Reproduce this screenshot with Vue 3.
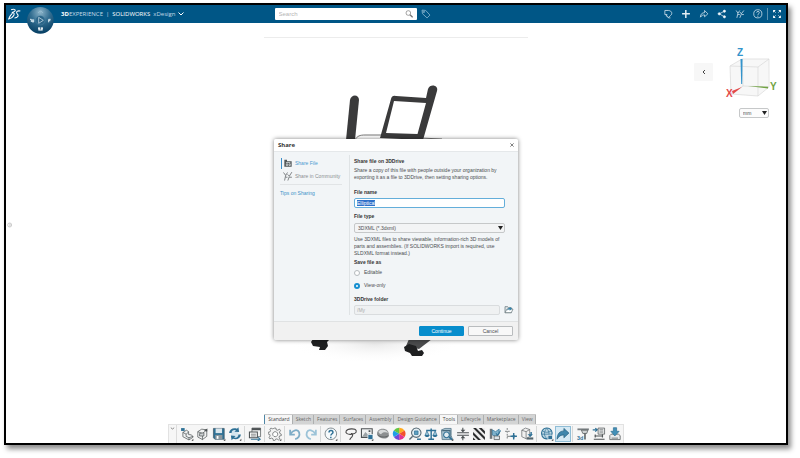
<script setup>
import { onMounted, ref } from 'vue'

const fileName = ref('Elliptical')
const fileType = ref('3dxml')
const saveAs = ref('view')
const folder = ref('/My')
const unit = ref('mm')
const query = ref('')
const nameInput = ref(null)

const tabs = ['Standard', 'Sketch', 'Features', 'Surfaces', 'Assembly', 'Design Guidance', 'Tools', 'Lifecycle', 'Marketplace', 'View']
const currentTabs = ['Standard', 'Tools']

const D = '#4d5254'
const B = '#2f7196'
const L = '#a9cfe2'
const W = '#ffffff'
const more = { d: 'M37 33v5h-5z', f: '#333' }

const groups = [
  [
    { name: 'New', p: [
      { d: 'M8 15l10-6 6 4v8l8 1 5 6-12 8-17-9z', f: '#eef0f1', s: D },
      { d: 'M8 15l9 5 7-6M17 20v6l8 4 11-4M25 30v6', s: D },
      { d: 'M3 3h10v8H3z', f: B }, more] },
    { name: 'Open', p: [
      { d: 'M5 13l11-7 14 2v18l-12 9-13-7z', f: '#f1f2f2', s: D },
      { d: 'M5 13l13 5 12-10M18 18v17', s: D },
      { d: 'M10 18l12-2v9H10z', f: '#cdd1d3', s: D },
      { d: 'M22 9l10-5-1 9z', f: D }] },
    { name: 'Save', p: [
      { d: 'M4 4h30v30H8l-4-4z', f: B, s: '#3c5665' },
      { d: 'M10 4h18v13H10z', f: '#dbe6ec' },
      { d: 'M9 22h20v12H9z', f: '#8d989e' },
      { d: 'M13 25h5v8h-5z', f: W }, more] },
    { name: 'Update', p: [
      { d: 'M9 8h20v23H9z', f: '#d5e6ef' },
      { d: 'M3 17C4 6 15 1 25 5l4-4 2 13-13-1 4-4C15 7 10 10 10 17z', f: B },
      { d: 'M36 21c-1 11-12 16-22 12l-4 4-2-13 13 1-4 4c7 2 12-1 12-8z', f: B }, more] },
  ],
  [
    { name: 'Properties', p: [
      { d: 'M11 3h24v24H11z', f: '#f3f4f4', s: D },
      { d: 'M11 3h24v6H11z', f: D },
      { d: 'M4 14h22v16H4z', f: W, s: D, w: 3 },
      { d: 'M8 20h14M8 25h14', s: D },
      { d: 'M8 34h22M27 28l7 6-7 5', s: B, w: 3 }] },
  ],
  [
    { name: 'Options', p: [
      { d: 'M17 3h5l1 5 4 1 5-3 3 4-3 4 1 4 4 2v4l-5 1-1 4 2 4-4 3-4-3-4 1-2 4h-4l-1-5-4-2-5 2-2-4 3-4-1-4-5-2v-4l5-1 2-4-2-4 3-3 5 2 3-1z', f: '#f2f2f2', s: '#5b5f61' },
      { d: 'M20 13a7 7 0 1 0 .1 0z', f: W, s: '#5b5f61' }, more] },
  ],
  [
    { name: 'Undo', p: [
      { d: 'M6 8v13h13', s: '#7fadc7', w: 5 },
      { d: 'M7 20C13 8 27 5 31 15c3 9-2 17-11 19', s: '#7fadc7', w: 5 }] },
    { name: 'Redo', p: [
      { d: 'M33 8v13H20', s: '#9cc3d8', w: 5 },
      { d: 'M32 20C26 8 12 5 8 15c-3 9 2 17 11 19', s: '#9cc3d8', w: 5 }] },
  ],
  [
    { name: 'Help', p: [
      { d: 'M19 3a16 16 0 1 0 .1 0z', f: '#f6fafc', s: '#536068' },
      { d: 'M14 15c0-7 11-7 11 0 0 4-6 4-6 9M19 27v4', s: B, w: 4 }, more] },
  ],
  [
    { name: 'Lasso', p: [
      { d: 'M22 20C10 22 3 17 6 11 10 4 31 3 34 10c2 7-8 11-14 8 4 0 5 4 3 8-2 3-6 5-7 10', s: '#4a4a4a', w: 3 }] },
    { name: 'Capture', p: [
      { d: 'M4 5h30v24H4z', f: '#eef0f0', s: D, w: 3 },
      { d: 'M6 27l9-13 7 7 4-4 6 10z', f: '#9ba2a5' },
      { d: 'M24 9h5v5h-5z', f: D },
      { d: 'M22 21h14v14H22z', f: B, s: W }, more] },
    { name: 'Section', p: [
      { d: 'M3 20C2 9 12 3 22 5c12 2 16 13 13 22-8 9-27 6-32-7z', f: '#8c8f90' },
      { d: 'M7 12c9-7 22-5 27 4-7-3-17-2-20 4-5-1-7-4-7-8z', f: '#d7d9d9' },
      { d: 'M4 22c9 7 22 8 31 2', s: '#505354' }] },
    { name: 'Appearance', p: [
      { d: 'M20 19V2a17 17 0 0 1 15 8z', f: '#ffa91e' },
      { d: 'M20 19l15-9a17 17 0 0 1 0 18z', f: '#f3512b' },
      { d: 'M20 19l15 9a17 17 0 0 1-15 8z', f: '#e3318e' },
      { d: 'M20 19v17A17 17 0 0 1 5 28z', f: '#7049d8' },
      { d: 'M20 19L5 28a17 17 0 0 1 0-18z', f: '#1e9fe6' },
      { d: 'M20 19L5 10a17 17 0 0 1 15-8z', f: '#62c544' }] },
    { name: 'Measure', p: [
      { d: 'M23 3a13 13 0 1 0 .1 0z', f: '#e5f0f5', s: '#5a6c76', w: 3 },
      { d: 'M13 26L4 35', s: '#5a6c76', w: 4 },
      { d: 'M18 11h10v10H18z', f: '#5d9fc0', s: B },
      { d: 'M25 32h11v4H25z', f: B }] },
    { name: 'Mass properties', p: [
      { d: 'M20 4v30M12 34h16M6 10h28', s: B, w: 4 },
      { d: 'M3 23l5-12 6 12zM25 23l6-12 5 12z', f: L, s: B },
      { d: 'M1 22h15l-4 6H5zM23 22h15l-4 6h-7z', f: B }] },
    { name: 'Bounding box', p: [
      { d: 'M4 8l10-4h17v20l4 11H6z', f: '#a8c2cf', s: '#486b7e' },
      { d: 'M6 10h22v22', s: '#486b7e', w: 3 },
      { d: 'M18 14a8 8 0 1 0 .1 0z', f: '#e2edf2', s: B, w: 3 },
      { d: 'M25 28l9 7', s: B, w: 4 }, more] },
    { name: 'Clearance', p: [
      { d: 'M3 16h33M3 23h33', s: D, w: 3 },
      { d: 'M19 2v9M19 28v9', s: D, w: 3 },
      { d: 'M13 8h13l-7 7zM13 31h13l-7-7z', f: D }] },
    { name: 'Zebra stripes', p: [
      { d: 'M3 3h33v33H3z', f: '#ededed' },
      { d: 'M3 3h8l25 25v8zM3 14l22 22h-8L3 22zM19 3h8l9 9v8zM3 29l7 7H3z', f: '#292b2c' }] },
    { name: 'Check', p: [
      { d: 'M5 5h7v28H5z', f: '#6f777b' },
      { d: 'M12 8l9 5 10-7v14l-10 7-9-5z', f: '#7eb2cc', s: B },
      { d: 'M17 25h15v10H17z', f: '#dce4e8', s: D },
      { d: 'M22 18l5 5 8-13', s: B, w: 3 }] },
    { name: 'Reference point', p: [
      { d: 'M9 3v32M3 12h14', s: D, w: 2, dash: '5 3' },
      { d: 'M9 26h10', s: D },
      { d: 'M27 17v18M18 26h18', s: B, w: 4 },
      { d: 'M22 26l5-5 5 5-5 5z', f: B }] },
    { name: 'Configurations', p: [
      { d: 'M5 9l10-6 12 4v19l-9 7-13-6z', f: '#f1f1f1', s: '#63686a' },
      { d: 'M5 9l12 4 10-6M17 13v20', s: '#63686a' },
      { d: 'M21 20h8v-6h4v6h3l-7 8-8-8z', f: B },
      { d: 'M19 29h18v6H19z', f: '#54666f' }] },
  ],
  [
    { name: 'Publish', p: [
      { d: 'M19 3a15 15 0 1 0 .1 0z', f: '#bfd9e5', s: B, w: 3 },
      { d: 'M7 11c7 5 16 5 24 0M4 20h29M19 4c-9 9-9 20 0 28M19 4c8 9 8 20 0 28', s: B },
      { d: 'M22 23h13v12H22z', f: B, s: W }, more] },
    { name: 'Share', active: true, p: [
      { d: 'M3 34C3 19 11 11 22 11V4l14 13-14 13v-8c-8 0-14 3-19 12z', f: '#3f86ac', s: '#29617f' }] },
  ],
  [
    { name: '3D print', label: '3d', p: [
      { d: 'M4 4h32v5H4z', f: '#7b8184' },
      { d: 'M15 9h18l-3 9H19z', f: '#d1d4d5', s: D },
      { d: 'M23 18h4v17h-4z', f: D }] },
    { name: 'Drawing', p: [
      { d: 'M2 8h12M9 3l6 5-6 5', s: B, w: 3 },
      { d: 'M17 3h18v17H17z', f: '#e8eaeb', s: D },
      { d: 'M21 8h10M21 14h10', s: D },
      { d: 'M7 25h24M9 21v8M29 20v9M5 34h30', s: D, w: 3 }] },
    { name: 'Import', p: [
      { d: 'M5 24l4-4h20l5 4v11H5z', f: '#e9ebec', s: D },
      { d: 'M15 2h9v10h7L19 25 8 12h7z', f: '#4390b7', s: B },
      { d: 'M10 31h18', s: D }] },
  ],
]

onMounted(() => {
  nameInput.value.focus({ preventScroll: true })
  nameInput.value.select()
})
</script>

<template>
  <div class="page">
    <div class="app">
      <header class="topbar">
        <svg class="ds" viewBox="0 0 38 38" aria-hidden="true">
          <path d="M9 5c7-3 15-1 11 4-2 3-6 4-9 4 7 0 9 4 5 10-3 5-8 8-14 9 3-8 6-12 11-17M36 9c-8-2-14 2-9 8 5 5 2 12-8 12" />
        </svg>
        <button class="compass" aria-label="Compass">
          <svg viewBox="0 0 81 81" aria-hidden="true">
            <defs>
              <radialGradient id="ball" cx=".5" cy=".2" r=".8">
                <stop offset="0" stop-color="#8db4c9" />
                <stop offset=".45" stop-color="#346f92" />
                <stop offset="1" stop-color="#053e63" />
              </radialGradient>
            </defs>
            <circle cx="40" cy="40" r="40" fill="url(#ball)" />
            <circle cx="40" cy="40" r="14" fill="#2b6689" stroke="#5b93b1" />
            <path d="M35 31l14 9-14 9z" fill="none" stroke="#d9e9f1" stroke-width="2" />
            <path d="M34 17c3-6 10-6 13 0" fill="none" stroke="#9cc2d6" stroke-width="3" />
            <path d="M9 37h4v8M16 37v8h4v-8" fill="none" stroke="#d9e9f1" stroke-width="3" />
            <path d="M65 46v-9h6M65 41h5" fill="none" stroke="#d9e9f1" stroke-width="3" />
            <path d="M35 61v6h3v-6M43 61v6h3v-6M34 69h13" fill="none" stroke="#fff" stroke-width="3" />
          </svg>
        </button>
        <h1 class="brand"><span class="suite"><b>3D</b>EXPERIENCE</span> <span>|</span> <span class="product">SOLIDWORKS</span> <span>xDesign</span>
          <svg viewBox="0 0 12 8" aria-hidden="true"><path d="M1 1l5 5 5-5" /></svg>
        </h1>
        <form class="search" @submit.prevent>
          <div class="searchbox">
            <input v-model="query" type="search" placeholder="Search" aria-label="Search">
            <button aria-label="Run search">
              <svg viewBox="0 0 24 24" aria-hidden="true"><circle cx="10" cy="9" r="7" /><path d="M15 14l8 8" stroke-width="4" /></svg>
            </button>
          </div>
          <button class="tag" aria-label="Tags">
            <svg viewBox="0 0 28 28" aria-hidden="true"><path d="M3 3l10 1 12 13-8 8L4 13z" /><circle cx="8" cy="8" r="2" /></svg>
          </button>
        </form>
        <nav class="actions">
          <button aria-label="Notifications"><svg viewBox="0 0 27 27"><path d="M5 4h10c10 1 11 10 5 14l-6 6-2-5H8l3-4H5z" /><path d="M15 24h5" /></svg></button>
          <button aria-label="Add"><svg viewBox="0 0 27 27"><path d="M13 3v21M3 13h21" stroke-width="4" /></svg></button>
          <button aria-label="Share content"><svg viewBox="0 0 27 27"><path d="M4 22c0-9 5-12 11-12V4l9 9-9 8v-5c-5 0-8 1-11 6z" /></svg></button>
          <button aria-label="Share links"><svg viewBox="0 0 27 27"><path d="M20 6L6 13l14 8" /><circle cx="20" cy="6" r="3" fill="#fff" /><circle cx="6" cy="13" r="3" fill="#fff" /><circle cx="20" cy="21" r="3" fill="#fff" /></svg></button>
          <button aria-label="Communities"><svg viewBox="0 0 27 27"><path d="M3 4l5 7 5-7M8 11L5 24M13 8l4 5 7-9M17 14l-4 10M18 15h6M8 15h5" /></svg></button>
          <button aria-label="Help"><svg viewBox="0 0 27 27"><circle cx="13" cy="13" r="11" /><path d="M10 10c0-5 7-5 7 0 0 3-4 3-4 6M13 18v3" /></svg></button>
          <button class="full" aria-label="Full screen"><svg viewBox="0 0 27 27"><path d="M3 3h7L3 10zM24 3h-7l7 7zM3 24h7l-7-7zM24 24h-7l7-7z" fill="#fff" stroke="none" /><path d="M3 3l7 7M24 3l-7 7M3 24l7-7M24 24l-7-7" /></svg></button>
        </nav>
      </header>

      <main class="stage">
        <svg class="model" viewBox="6 23 780 420" preserveAspectRatio="xMidYMin meet" aria-hidden="true">
          <defs>
            <radialGradient id="floor">
              <stop offset="0" stop-color="#e9e9e9" />
              <stop offset="1" stop-color="#fff" stop-opacity="0" />
            </radialGradient>
          </defs>
          <path d="M264 37.500h264" stroke="#ececec" />
          <ellipse cx="375" cy="344" rx="85" ry="19" fill="url(#floor)" />
          <path d="M355 140c2-4 5-5 10-5h20M420 138l22 1 3 3" fill="none" stroke="#777" stroke-width="1" />
          <path d="M346 140l4-40c1-6 9-6 9 0l-4 40z" fill="#3a3a3b" />
          <path d="M380 138l11-39q1-4 5-3l30 2 2-9c2-6 11-4 9 2l-14 49zM394 101l-8 32 31.500 1 8.500-31z" fill="#3a3a3b" fill-rule="evenodd" />
          <path d="M319 339h11l-3 3 1 4-3 4h-6l1-3-7-1-2-4 2-3z" fill="#1e1f20" />
          <path d="M409 339h23l-13 10-13-3z" fill="#4a4b4c" />
          <path d="M404 347l5-3 7 2 2 5 4-1 2 3-2 3h-10l-2-3-5-2z" fill="#1e1f20" />
        </svg>

        <button class="expand" aria-label="Expand panel">
          <svg viewBox="0 0 18 18" aria-hidden="true"><circle cx="8" cy="9" r="6" /><path d="M6 5l5 4-5 4" /></svg>
        </button>

        <aside class="view-tools">
          <button class="collapse" aria-label="Show view options"><svg viewBox="0 0 12 16" aria-hidden="true"><path d="M9 2L3 8l6 6" /></svg></button>
          <div class="orientation">
            <svg viewBox="722 45 56 55" role="img" aria-label="View orientation">
              <path d="M730 66l12-7 27 0-1 28-10 9-27-2z" fill="#f7f7f7" />
              <path d="M730 66l12-7h27l-11 8zM758 67v29l-27-2-1-28M758 96l11-9V59M742 59l1 27 26 1M743 86l-12 8" fill="none" stroke="#d8d8d8" stroke-width=".7" />
              <path d="M740.500 59h2l-.3 25h-1z" fill="#3394cc" />
              <path d="M748 86l20 .7v1.800z" fill="#71a343" />
              <path d="M742 87l-10 4 1 3z" fill="#e34949" />
              <text x="737" y="56" fill="#3394cc">Z</text>
              <text x="770" y="90" fill="#71a343">Y</text>
              <text x="726" y="97" fill="#e34949">X</text>
            </svg>
            <div class="select unit">
              <select v-model="unit" aria-label="Units"><option value="mm">mm</option><option value="in">in</option></select>
              <svg viewBox="0 0 10 8" aria-hidden="true"><path d="M0 0h10L5 8z" /></svg>
            </div>
          </div>
        </aside>

        <section class="commands">
          <div class="tabs" role="tablist">
            <button v-for="t in tabs" :key="t" role="tab" :class="{ on: currentTabs.includes(t) }">{{ t }}</button>
          </div>
          <div class="toolbar" role="toolbar" aria-label="Commands">
            <button class="grip" aria-label="Collapse toolbar"><svg viewBox="0 0 12 8"><path d="M2 1l4 3 4-3" /></svg></button>
            <div v-for="(g, i) in groups" :key="i" class="group">
              <button v-for="tool in g" :key="tool.name" :aria-label="tool.name" class="tool" :class="{ active: tool.active }">
                <svg viewBox="0 0 39 39" aria-hidden="true">
                  <path v-for="(s, k) in tool.p" :key="k" :d="s.d" :fill="s.f || 'none'" :stroke="s.s || 'none'" :stroke-width="s.w || 2" :stroke-dasharray="s.dash" />
                  <text v-if="tool.label" x="3" y="37">{{ tool.label }}</text>
                </svg>
              </button>
            </div>
          </div>
        </section>

        <div class="overlay">
          <form class="dialog" role="dialog" aria-labelledby="dialog-title" @submit.prevent>
            <div class="titlebar">
              <h2 id="dialog-title">Share</h2>
              <button type="button" class="close" aria-label="Close"><svg viewBox="0 0 12 12"><path d="M1 1l10 10M11 1L1 11" /></svg></button>
            </div>
            <div class="body">
              <nav class="side">
                <a href="#file" class="item current">
                  <svg viewBox="0 0 30 30" aria-hidden="true"><path d="M4 4h8v4h14v17H4z" fill="#505658" /><path d="M9 12h13M10 16h4v5h-4zM18 16h4v5h-4z" stroke="#e8edef" stroke-width="2" fill="none" /></svg>
                  <span>Share File</span>
                </a>
                <a href="#community" class="item">
                  <svg viewBox="0 0 30 30" aria-hidden="true"><path d="M4 4l6 8 5-8M10 12L7 26M15 9l5 5 7-11M20 15l-4 11M20 17h7M10 17h5" fill="none" stroke="#5b5f61" stroke-width="2" /></svg>
                  <span>Share in Community</span>
                </a>
                <a href="#tips" class="tips">Tips on Sharing</a>
              </nav>
              <div class="form">
                <h3>Share file on 3DDrive</h3>
                <p>Share a copy of this file with people outside your organization by exporting it as a file to 3DDrive, then setting sharing options.</p>
                <label class="name" for="file-name">File name</label>
                <input id="file-name" ref="nameInput" v-model="fileName" type="text">
                <label for="file-type">File type</label>
                <div class="select">
                  <select id="file-type" v-model="fileType"><option value="3dxml">3DXML (*.3dxml)</option><option value="sldxml">SLDXML (*.sldxml)</option></select>
                  <svg viewBox="0 0 10 8" aria-hidden="true"><path d="M0 0h10L5 8z" /></svg>
                </div>
                <p class="hint">Use 3DXML files to share viewable, information-rich 3D models of parts and assemblies. (If SOLIDWORKS import is required, use SLDXML format instead.)</p>
                <fieldset>
                  <legend>Save file as</legend>
                  <label><input v-model="saveAs" type="radio" name="save-as" value="edit">Editable</label>
                  <label><input v-model="saveAs" type="radio" name="save-as" value="view">View-only</label>
                </fieldset>
                <label class="where" for="folder">3DDrive folder</label>
                <div class="folder">
                  <input id="folder" v-model="folder" type="text" disabled>
                  <button type="button" aria-label="Choose folder">
                    <svg viewBox="0 0 30 27" aria-hidden="true"><path d="M3 5h8l2 3h9v15H3z" fill="#e2e8eb" stroke="#596970" stroke-width="2" /><path d="M3 23l6-11h18l-5 11z" fill="#fff" stroke="#596970" stroke-width="2" /><path d="M10 17c0-6 3-8 7-8V5l7 6-7 6v-4c-3 0-5 1-7 4z" fill="#3483a9" /></svg>
                  </button>
                </div>
              </div>
            </div>
            <footer>
              <button type="submit" class="primary">Continue</button>
              <button type="button">Cancel</button>
            </footer>
          </form>
        </div>
      </main>
    </div>
  </div>
</template>

<style>
body { background: #fff; }
</style>

<style scoped>
.page { box-sizing: border-box; height: 100vh; padding: 3px 12px 13px 4px; font: 5px/7px "Liberation Sans", Arial, sans-serif; color: #4a4d50; }
.page * { box-sizing: border-box; }
.app { display: flex; flex-direction: column; height: 100%; border: 2px solid #000; box-shadow: 3px 4px 5px rgba(0, 0, 0, .45); background: #fff; }
button { padding: 0; border: 0; background: none; font: inherit; color: inherit; display: flex; align-items: center; justify-content: center; }
h1, h2, h3, p, fieldset, legend { margin: 0; padding: 0; border: 0; font: inherit; }
input, select { font: inherit; color: inherit; margin: 0; min-width: 0; }
svg { display: block; }

.topbar { position: relative; z-index: 2; display: grid; grid-template: 18px / 19px 26px 5fr auto 8fr; align-items: center; flex: none; padding: 0 1px 0 2px; background: #005686; color: #fff; }
.ds { width: 13px; height: 13px; fill: none; stroke: #fff; stroke-width: 3; }
.compass { align-self: start; height: 29px; padding-top: 2px; }
.compass svg { width: 27px; height: 27px; flex: none; }
.brand { display: flex; align-items: center; gap: 3px; padding-left: 8px; font: 6px/8px "Open Sans", sans-serif; white-space: nowrap; color: #c4dae6; }
.brand b, .brand .product { color: #fff; }
.brand svg { width: 6px; height: 4px; fill: none; stroke: #fff; stroke-width: 2; }
.search { display: flex; align-items: center; gap: 4px; }
.searchbox { display: flex; align-items: center; width: 142px; height: 12px; padding: 0 4px; border-radius: 1px; background: #fff; }
.searchbox input { flex: 1; border: 0; outline: 0; padding: 0; background: none; font-size: 6px; color: #555; appearance: none; }
.searchbox input::placeholder { color: #b5b5b5; }
.searchbox svg { width: 8px; height: 8px; fill: none; stroke: #777; stroke-width: 2; }
.tag svg { width: 10px; height: 10px; fill: none; stroke: #9fc6dc; stroke-width: 2; }
.actions { display: flex; justify-content: flex-end; }
.actions button { width: 18px; height: 12px; }
.actions svg { width: 10px; height: 10px; fill: none; stroke: #e3eef4; stroke-width: 2; }
.actions .full { border-left: 1px solid #5c93b1; }

.stage { position: relative; flex: 1; min-height: 0; overflow: hidden; }
.model { position: absolute; inset: 0; width: 100%; height: 100%; }
.expand { position: absolute; left: 1px; top: 199px; }
.expand svg { width: 6px; height: 6px; fill: none; stroke: #b5b5b5; stroke-width: 2; }
.view-tools { position: absolute; top: 22px; right: 8px; display: flex; align-items: flex-start; gap: 9px; }
.collapse { width: 19px; height: 18px; margin-top: 18px; background: #f7f7f7; border-radius: 1px; }
.collapse svg { width: 4px; height: 6px; fill: none; stroke: #444; stroke-width: 3; }
.orientation { display: flex; flex-direction: column; }
.orientation > svg { width: 56px; height: 55px; }
.orientation text { font: bold 10px "Liberation Sans", sans-serif; }

.select { position: relative; height: 10px; }
.select select { display: block; width: 100%; height: 100%; padding: 0 3px; border: 1px solid #c6c8c9; border-radius: 2px; background: #f3f4f5; appearance: none; outline: 0; }
.select svg { position: absolute; right: 2px; top: 3px; width: 5px; height: 4px; fill: #222; pointer-events: none; }
.unit { width: 30px; margin: 8px 0 0 17px; }
.unit select { background: #fcfcfc; }

.commands { position: absolute; left: 0; right: 0; bottom: 0; display: flex; flex-direction: column; align-items: center; }
.tabs { display: flex; height: 10px; margin-left: 8px; border-top: 1px solid #c9c9c9; font: 5px/9px "Open Sans", sans-serif; }
.tabs button { padding: 0 2px 0 3px; background: #d3d4d4; border-right: 1px solid #aeb0b0; color: #666; }
.tabs .on { background: #f6f6f6; color: #444; }
.tabs button:first-child { border-left: 1px solid #4f86a5; }
.toolbar { display: flex; align-items: center; height: 19px; border: 1px solid #e2e2e2; border-bottom: 0; background: #f6f6f6; }
.grip { width: 8px; height: 18px; align-items: flex-start; padding-top: 2px; border-right: 1px solid #dcdcdc; }
.grip svg { width: 5px; height: 4px; fill: none; stroke: #777; stroke-width: 2; }
.group { display: flex; padding: 0 1px 0 2px; border-right: 1px solid #d5d7d7; }
.group:last-child { border-right: 0; padding-right: 0; }
.tool { width: 16px; height: 16px; }
.tool svg { width: 14px; height: 14px; }
.tool text { font: bold 15px "Liberation Sans", sans-serif; fill: #2f7196; }
.tool.active { background: #d5e9f4; box-shadow: inset 0 0 0 1px #8fbdd6; }

.overlay { position: absolute; inset: 0; display: flex; justify-content: center; align-items: flex-start; padding-top: 116px; }
.dialog { width: 244px; border-radius: 2px; background: #f2f5f7; box-shadow: 0 0 4px rgba(0, 0, 0, .5); overflow: hidden; }
.titlebar { display: flex; align-items: center; justify-content: space-between; height: 13px; padding: 0 4px; background: #fff; border-bottom: 1px solid #e5e8ea; }
.titlebar h2 { font: bold 6px/8px "Open Sans", sans-serif; color: #333; }
.close svg { width: 4px; height: 4px; fill: none; stroke: #444; stroke-width: 2; }
.body { display: grid; grid-template-columns: 72px 1fr; padding: 3px 5px 6px 4px; }
.side { border-right: 1px solid #dfe3e5; padding: 2px 7px 0 2px; }
.item { display: flex; align-items: center; height: 13px; padding-left: 1px; gap: 2px; color: #8b8f92; text-decoration: none; white-space: nowrap; }
.item svg { width: 12px; height: 11px; flex: none; padding-left: 1px; }
.item.current { color: #4a9bd1; }
.item.current svg { border-left: 1px solid #3d8fc9; }
.tips { display: block; margin-top: 1px; padding-top: 5px; border-top: 1px solid #e1e4e6; color: #3d92c9; text-decoration: none; white-space: nowrap; }
.form { display: flex; flex-direction: column; padding: 3px 8px 0 4px; }
h3, .form > label, legend { font-weight: bold; color: #333; }
.form p { margin-top: 2px; }
.form > label { margin-top: 5px; }
.form > .name { margin-top: 8px; }
.form > .where { margin-top: 4px; }
.form input[type="text"] { height: 10px; margin-top: 2px; padding: 0 2px; border: 1px solid #64aeda; border-radius: 2px; background: #fff; outline: 0; }
.form input::selection { background: #2e6fc9; color: #fff; }
.form .select { margin-top: 3px; }
.form .hint { margin-top: 3px; }
fieldset { margin-top: 2px; display: flex; flex-direction: column; }
fieldset label { display: flex; align-items: center; gap: 4px; height: 13px; }
input[type="radio"] { appearance: none; width: 6px; height: 6px; border: 1px solid #b5babd; border-radius: 50%; background: #fff; }
input[type="radio"]:checked { border: 2px solid #168fd0; }
.folder { display: flex; align-items: center; gap: 4px; margin-right: -9px; }
.form .folder input { flex: 1; border-color: #d9dcde; background: #eff1f2; color: #aaa; }
.folder svg { width: 10px; height: 9px; }
footer { display: flex; justify-content: flex-end; gap: 4px; padding: 4px 5px; background: #f1f1f1; border-top: 1px solid #e0e2e3; }
footer button { width: 45px; height: 10px; border: 1px solid #b9bcbe; border-radius: 1px; background: #f8f8f8; }
footer .primary { border-color: #078dcc; background: #078dcc; color: #fff; }
</style>
